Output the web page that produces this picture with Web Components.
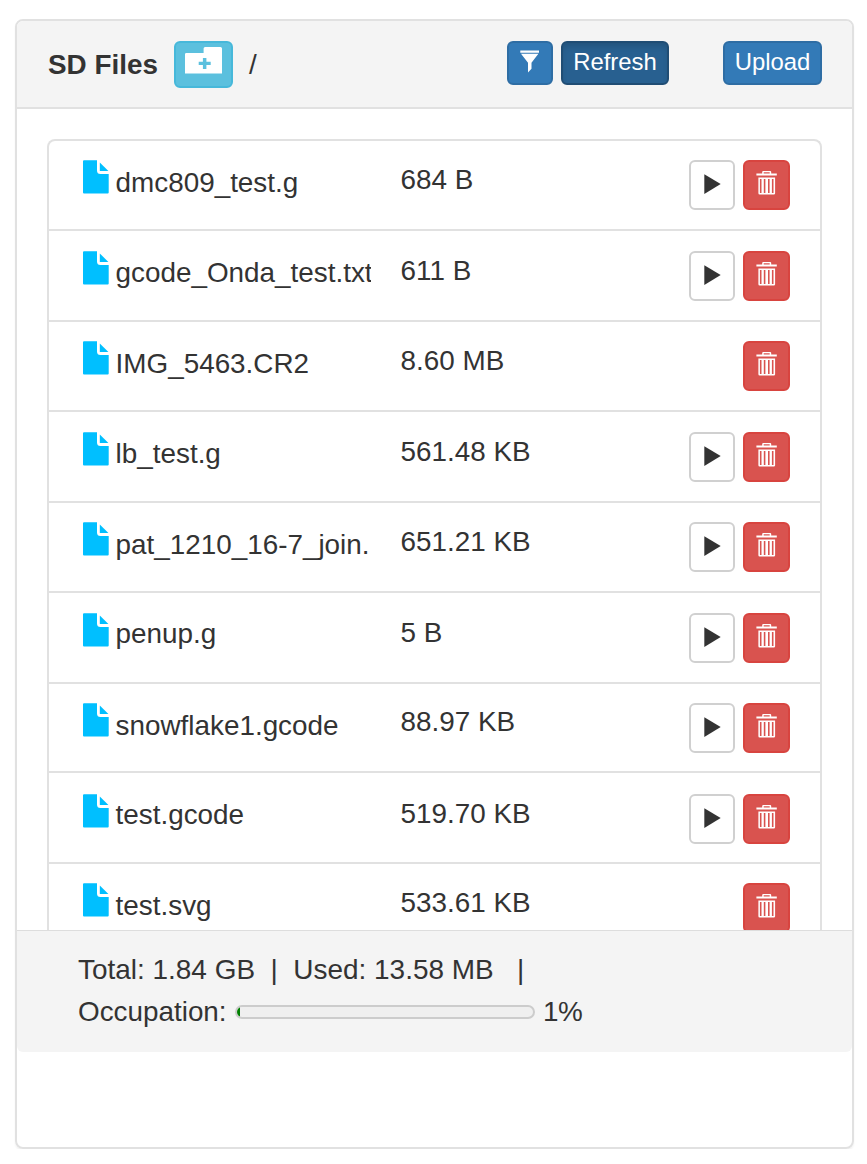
<!DOCTYPE html>
<html lang="en">
<head>
<meta charset="utf-8">
<title>SD Files</title>
<style>
html,body{margin:0;background:#fff}
body{font:27.85px/40px "Liberation Sans",Arial,sans-serif;color:#333}
</style>
</head>
<body>
<sd-panel></sd-panel>
<script>
const define = (name, html, setup) => customElements.define(name, class extends HTMLElement {
  connectedCallback() {
    if (this.shadowRoot) return;
    this.attachShadow({mode: 'open'}).innerHTML = '<style>*{box-sizing:border-box}svg{display:block}</style>' + html;
    if (setup) setup(this, this.shadowRoot);
  }
});

const icons = {
  file: [26, 34, '<path d="M1 .3H14V10.5Q14 14.1 17.5 14.1H25.7V32.6Q25.7 33.6 24.7 33.6H1Q0 33.6 0 32.6V1.3Q0 .3 1 .3Z"/><path d="M16.8 2.4L25.4 11H16.8Z"/>'],
  play: [17, 20, '<path d="M.3 .3L16.7 10.1L.3 19.9Z"/>'],
  trash: [21, 24, '<path fill-rule="evenodd" d="M6.2 2.5V1Q6.2 0 7.2 0H14.2Q15.2 0 15.2 1V2.5H20.8V4.6H.4V2.5ZM7.7 2.5H13.7V1.2H7.7ZM2.4 6.6H19.1V22.3Q19.1 23.6 17.8 23.6H3.7Q2.4 23.6 2.4 22.3ZM3.9 8V22.1H5.5V8ZM7.8 8V22.1H9.4V8ZM12 8V22.1H13.6V8ZM15.9 8V22.1H17.5V8Z"/>'],
  filter: [20, 23, '<path d="M.3 .5H19V2.7H.3ZM1 3.8H18.4L11.5 12.8V18.8L8 22.6V12.8Z"/>'],
  folder: [37, 27, '<path fill-rule="evenodd" d="M1.3 6H18.6V1.5Q18.6 0 20.1 0H35.5Q37 0 37 1.5V26.6H0V7.3Q0 6 1.3 6ZM17.9 11.1V14.7H13.7V18.1H17.9V21.9H21.4V18.1H25.7V14.7H21.4V11.1Z"/>']
};
define('ui-icon', '<style>:host{display:block;flex:none}</style><div></div>', (el, root) => {
  const [w, h, body] = icons[el.getAttribute('name')];
  root.querySelector('div').innerHTML = `<svg width="${w}" height="${h}" viewBox="0 0 ${w} ${h}" fill="currentColor">${body}</svg>`;
});

define('ui-button', `<style>
:host{display:block;flex:none;width:var(--w,46px);height:var(--h,44px)}
button{display:flex;align-items:flex-start;justify-content:center;width:100%;height:100%;margin:0;padding:var(--pt,1px) 0 0;border:2px solid var(--edge,#2e6da4);border-radius:6px;background:var(--bg,#337ab7);color:var(--fg,#fff);font:23.9px/36px "Liberation Sans",Arial,sans-serif}
:host([kind=active]){--bg:#286090;--edge:#204d74}
:host([kind=active]) button{box-shadow:inset 0 5px 6px -2px rgba(0,0,0,.14)}
:host([kind=info]){--bg:#5bc0de;--edge:#46b8da}
:host([kind=danger]){--bg:#d9534f;--edge:#d8443f}
:host([kind=default]){--bg:#fff;--edge:#d0d0d0;--fg:#333}
</style><button type="button"><slot></slot></button>`);

define('file-row', `<style>
:host{display:block;border-bottom:2px solid #e1e1e1;height:var(--rh)}
.row{display:grid;grid-template-columns:288px 1fr auto;padding:var(--top) 30px 0 34px;align-items:start}
.name{display:flex;align-items:flex-start;gap:6.6px;width:288px;overflow:hidden;color:#333}
ui-icon{color:#00bfff}
.actions ui-icon{color:inherit}
.label{padding-top:var(--np);white-space:nowrap}
.size{padding-left:29.6px;margin-top:var(--sp)}
.actions{display:flex;gap:8px}
ui-button{--h:50px;--pt:9px}
</style><div class="row"><div class="name"><ui-icon name="file"></ui-icon><span class="label"></span></div><span class="size"></span><div class="actions"></div></div>`, (el, root) => {
  root.querySelector('.label').textContent = el.getAttribute('name');
  root.querySelector('.size').textContent = el.getAttribute('size');
  root.querySelector('.actions').innerHTML =
    (el.hasAttribute('printable') ? '<ui-button kind="default" style="--pt:12px"><ui-icon name="play" style="color:#333"></ui-icon></ui-button>' : '') +
    '<ui-button kind="danger" style="--w:47px"><ui-icon name="trash"></ui-icon></ui-button>';
});

define('file-list', `<style>
:host{display:block;box-sizing:border-box;height:821px;overflow:hidden;padding:30px 30px 0}
.list{border:2px solid #e1e1e1;border-bottom:0;border-radius:8px 8px 0 0}
</style><div class="list"></div>`, (el, root) => {
  const files = [
    ['dmc809_test.g', '684 B', 1, 90, 19, 3, 0],
    ['gcode_Onda_test.txt', '611 B', 1, 91, 20, 2, 0],
    ['IMG_5463.CR2', '8.60 MB', 0, 90, 19, 3, 0],
    ['lb_test.g', '561.48 KB', 1, 91, 20, 2, 0],
    ['pat_1210_16-7_join.', '651.21 KB', 1, 90, 19, 3, 0],
    ['penup.g', '5 B', 1, 91, 20, 1, 0],
    ['snowflake1.gcode', '88.97 KB', 1, 89, 19, 3, -1],
    ['test.gcode', '519.70 KB', 1, 91, 21, 1, 0],
    ['test.svg', '533.61 KB', 0, 90, 19, 3, 0]
  ];
  root.querySelector('.list').innerHTML = files.map(([n, s, p, h, top, np, sp]) =>
    `<file-row name="${n}" size="${s}" ${p ? 'printable' : ''} style="--rh:${h}px;--top:${top}px;--np:${np}px;--sp:${sp}px"></file-row>`).join('');
});

define('usage-bar', `<style>
:host{display:block;width:300px;height:14px;border:2px solid #ccc;border-radius:8px;background:#efefef;overflow:hidden;box-sizing:border-box}
div{width:1%;height:100%;background:green}
</style><div></div>`);

define('storage-footer', `<style>
:host{display:block;box-sizing:border-box;height:122px;border-top:1px solid #ddd;background:#f4f4f4;border-radius:0 0 6px 6px;padding:19px 61px 0}
.line{white-space:pre;height:42px}
.line:first-of-type{font-size:27.95px}
.meter{display:flex}
.meter span:first-child{width:149px}
.meter span:last-child{letter-spacing:-.6px}
usage-bar{margin:13px 8px 0}
</style><div class="line">Total: 1.84 GB&nbsp; |&nbsp; Used: 13.58 MB&nbsp;&nbsp; |</div><div class="line meter"><span>Occupation:</span><usage-bar></usage-bar><span>1%</span></div>`);

define('panel-header', `<style>
:host{display:flex;box-sizing:border-box;height:88px;padding:20px 30px 0 31px;background:#f4f4f4;border-bottom:2px solid #e1e1e1;border-radius:6px 6px 0 0;align-items:flex-start}
b{width:126px;padding-top:4px}
.path{padding:4px 0 0 16px;flex:1}
</style><b>SD Files</b><ui-button kind="info" style="--w:59px;--h:47px;--pt:4px"><ui-icon name="folder"></ui-icon></ui-button><span class="path">/</span><ui-button style="--w:46px;--pt:7px"><ui-icon name="filter"></ui-icon></ui-button><ui-button kind="active" style="--w:108px;margin-left:8px">Refresh</ui-button><ui-button style="--w:99px;margin-left:54px">Upload</ui-button>`);

define('sd-panel', `<style>
:host{display:block;padding:19px 13px 0 15px}
section{height:1130px;border:2px solid #e1e1e1;border-radius:8px;box-shadow:0 2px 2px rgba(0,0,0,.05)}
</style><section><panel-header></panel-header><file-list></file-list><storage-footer></storage-footer></section>`);
</script>
</body>
</html>
